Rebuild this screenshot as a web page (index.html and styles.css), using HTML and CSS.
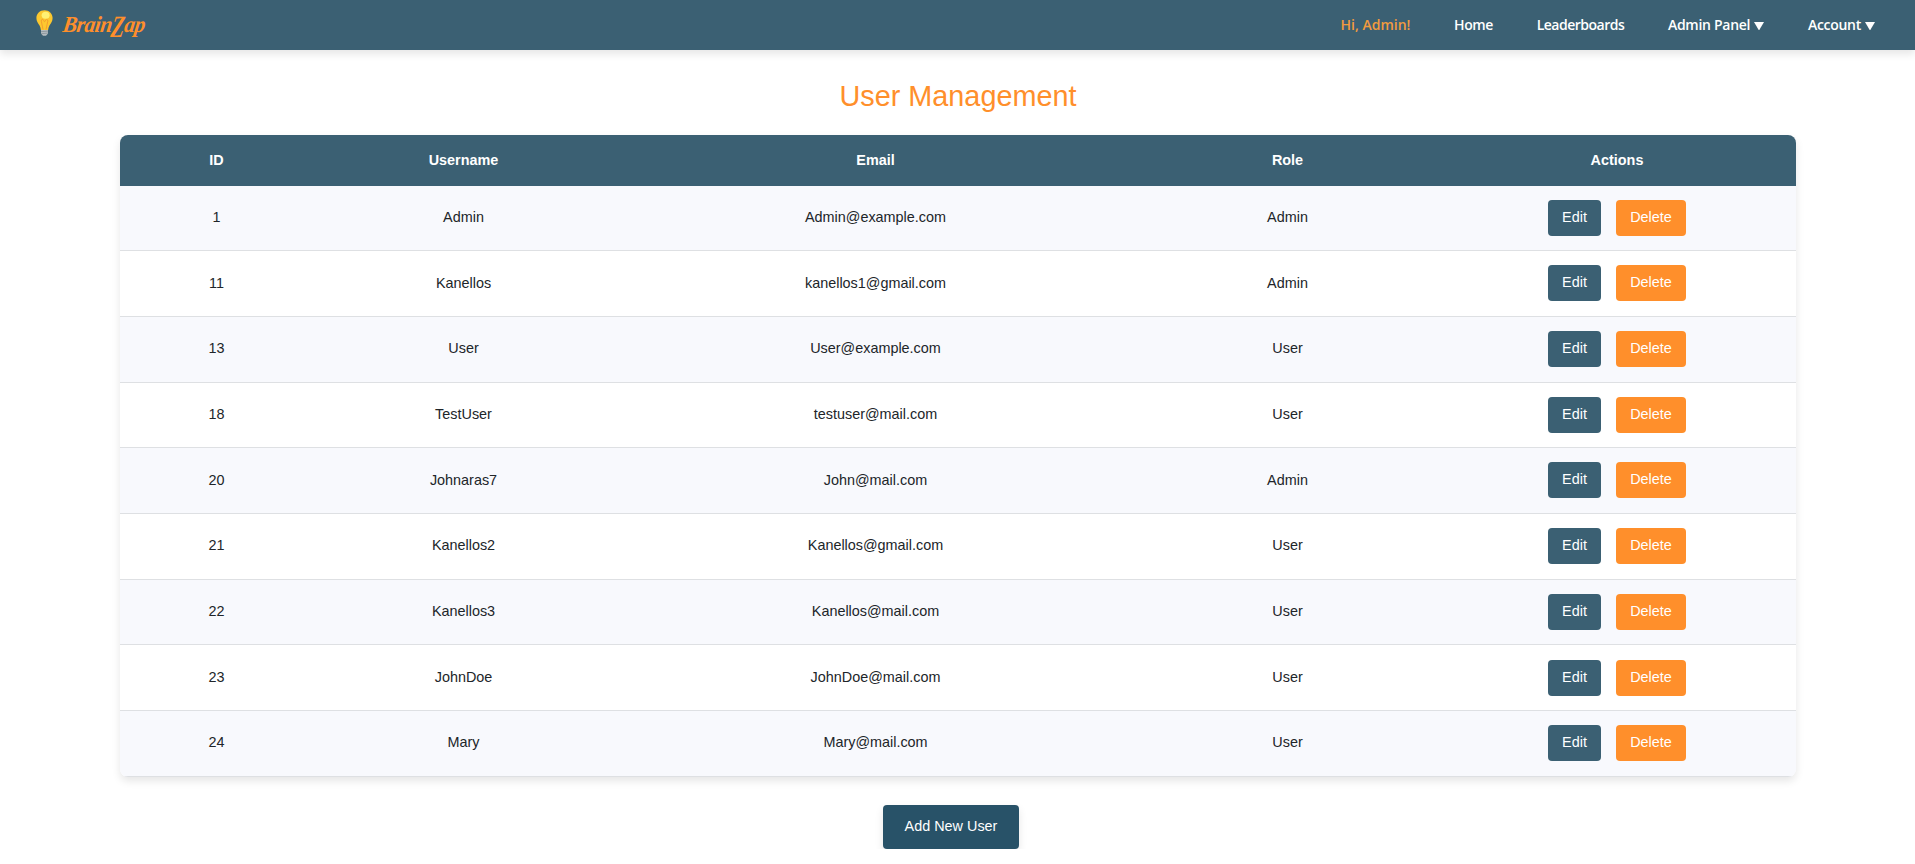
FILE: index.html
```html
<!DOCTYPE html>
<html lang="en">
<head>
<meta charset="utf-8">
<title>User Management</title>
<link rel="stylesheet" href="styles.css">
</head>
<body>
<header class="navbar">
  <a class="brand">
    <svg class="bulb" width="17" height="26" viewBox="0 0 17 26">
      <path d="M8.500.3C3.800.3.4 3.700.4 8c0 3.300 1.600 5 3 7.300.9 1.500 1.200 3 1.500 4.700h7.200c.3-1.700.6-3.200 1.500-4.700 1.400-2.300 3-4 3-7.300C16.600 3.700 13.200.3 8.500.3z" fill="#fcc82f"/>
      <path d="M7 19.500 5.300 11.200c-.5-2.400 2.200-2.400 2.400-.6.300 1.400 1.500 1.400 1.700 0 .3-1.800 2.900-1.700 2.400.6L10 19.500" fill="none" stroke="#f29a2e" stroke-width=".9"/>
      <ellipse cx="9.600" cy="5.200" rx="4" ry="3.500" fill="#fff173"/>
      <path d="M5 20h7v3.600l-2 2.100H7l-2-2.100z" fill="#b4bcc1"/>
      <path d="M5 21.700l7-.6M5 23.700l7-.6" stroke="#7d898f" stroke-width=".7"/>
    </svg>
    <span class="brand-name">Brain<span class="zap">Z</span>ap</span>
  </a>
  <nav class="links">
    <span class="greeting">Hi, Admin!</span>
    <a class="home">Home</a>
    <a class="leader">Leaderboards</a>
    <a class="menu">Admin Panel <svg width="10" height="8" viewBox="0 0 10 8"><path d="M0 0h10L5 8.500z" fill="#fff"/></svg></a>
    <a class="menu">Account <svg width="10" height="8" viewBox="0 0 10 8"><path d="M0 0h10L5 8.500z" fill="#fff"/></svg></a>
  </nav>
</header>
<main class="page">
  <h1>User Management</h1>
  <table class="users">
    <colgroup><col class="c-id"><col class="c-name"><col class="c-email"><col class="c-role"><col class="c-actions"></colgroup>
    <thead><tr><th>ID</th><th>Username</th><th>Email</th><th>Role</th><th>Actions</th></tr></thead>
    <tbody>
      <tr><td>1</td><td>Admin</td><td>Admin@example.com</td><td>Admin</td><td><div class="actions"><a class="btn edit">Edit</a><a class="btn delete">Delete</a></div></td></tr>
      <tr><td>11</td><td>Kanellos</td><td>kanellos1@gmail.com</td><td>Admin</td><td><div class="actions"><a class="btn edit">Edit</a><a class="btn delete">Delete</a></div></td></tr>
      <tr><td>13</td><td>User</td><td>User@example.com</td><td>User</td><td><div class="actions"><a class="btn edit">Edit</a><a class="btn delete">Delete</a></div></td></tr>
      <tr><td>18</td><td>TestUser</td><td>testuser@mail.com</td><td>User</td><td><div class="actions"><a class="btn edit">Edit</a><a class="btn delete">Delete</a></div></td></tr>
      <tr><td>20</td><td>Johnaras7</td><td>John@mail.com</td><td>Admin</td><td><div class="actions"><a class="btn edit">Edit</a><a class="btn delete">Delete</a></div></td></tr>
      <tr><td>21</td><td>Kanellos2</td><td>Kanellos@gmail.com</td><td>User</td><td><div class="actions"><a class="btn edit">Edit</a><a class="btn delete">Delete</a></div></td></tr>
      <tr><td>22</td><td>Kanellos3</td><td>Kanellos@mail.com</td><td>User</td><td><div class="actions"><a class="btn edit">Edit</a><a class="btn delete">Delete</a></div></td></tr>
      <tr><td>23</td><td>JohnDoe</td><td>JohnDoe@mail.com</td><td>User</td><td><div class="actions"><a class="btn edit">Edit</a><a class="btn delete">Delete</a></div></td></tr>
      <tr><td>24</td><td>Mary</td><td>Mary@mail.com</td><td>User</td><td><div class="actions"><a class="btn edit">Edit</a><a class="btn delete">Delete</a></div></td></tr>
    </tbody>
  </table>
  <a class="add">Add New User</a>
</main>
</body>
</html>
```
FILE: styles.css
```css
* { box-sizing: border-box; }
body {
  margin: 0;
  background: #fff;
  color: #212529;
  font: 14.4px/21.6px "Liberation Sans", Arial, sans-serif;
}
.navbar {
  display: flex;
  align-items: center;
  justify-content: space-between;
  height: 50px;
  padding: 0 40px 0 36px;
  background: #3b6073;
  box-shadow: 0 4px 8px rgba(0, 0, 0, .1);
}
.brand { display: flex; align-items: center; gap: 10px; height: 50px; }
.bulb { display: block; margin-bottom: 5px; }
.brand-name {
  color: #ff8f2b;
  font: italic bold 23px/30px "Brush Script MT", "Liberation Serif", cursive;
  letter-spacing: -.6px;
  transform: skewX(-8deg) scaleX(.94);
  transform-origin: left center;
}
.zap { display: inline-block; transform: translateY(3px) scaleY(1.35); }
.links {
  display: flex;
  gap: 43.7px;
  color: #fff;
  font: 600 14px/20px "Segoe UI", "Open Sans", sans-serif;
  letter-spacing: -.28px;
}
.greeting { color: #f29b3e; letter-spacing: 0; }
.home { letter-spacing: -.4px; }
.leader { letter-spacing: -.5px; }
.menu { display: flex; align-items: center; gap: 4px; }
.menu svg { margin-top: 2px; }
.page { display: flex; flex-direction: column; align-items: center; }
h1 {
  margin: 29px 0 21px;
  padding-left: 1px;
  color: #ff8f2b;
  font-size: 28.8px;
  font-weight: 400;
  line-height: 35px;
}
.users {
  width: 1676px;
  table-layout: fixed;
  border-collapse: separate;
  border-spacing: 0;
  border-radius: 8px;
  overflow: hidden;
  box-shadow: 0 4px 8px rgba(0, 0, 0, .1);
  text-align: center;
}
.c-id { width: 193px; }
.c-name, .c-role { width: 301px; }
.c-email { width: 523px; }
.c-actions { width: 358px; }
th { height: 50.6px; padding: 0 0 0 1px; background: #3b6073; color: #fff; }
td { height: 65.7px; padding: 0 0 .4px 1px; border-bottom: 1px solid #dee0e3; }
tbody tr:nth-child(odd) { background: #f8f9fd; }
.actions { display: flex; justify-content: center; gap: 15px; }
.btn {
  height: 36px;
  border-radius: 4px;
  color: #fff;
  line-height: 35px;
}
.edit { width: 53px; background: #3b6073; }
.delete { width: 70px; background: #ff8f2b; }
.add {
  width: 136px;
  height: 44px;
  margin: 28px 13px 0 0;
  border-radius: 4px;
  background: #285268;
  box-shadow: 0 4px 8px rgba(0, 0, 0, .1);
  color: #fff;
  line-height: 43px;
  text-align: center;
}
```
